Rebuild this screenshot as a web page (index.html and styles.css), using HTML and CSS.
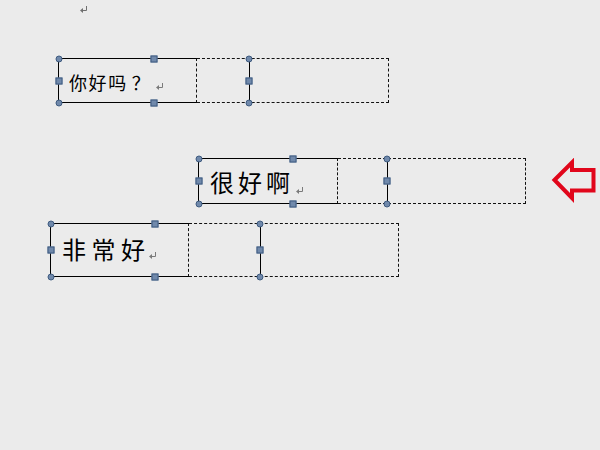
FILE: index.html
```html
<!DOCTYPE html>
<html lang="zh">
<head>
<meta charset="utf-8">
<title>文本框</title>
<link rel="stylesheet" href="styles.css">
</head>
<body>
<div class="page">
  <div class="mark-top">
    <svg class="ret" viewBox="0 0 7 7" width="7" height="7"><path d="M6.5 0 V4.5 H2.5" fill="none" stroke="#6f6f6f" stroke-width="1"/><polygon points="0,4.5 3,2 3,7" fill="#6f6f6f"/></svg>
  </div>

  <div class="frame f1">
    <div class="cell-a"><span class="txt">你好吗<span class="qm">？</span></span><svg class="ret" viewBox="0 0 7 7" width="7" height="7"><path d="M6.5 0 V4.5 H2.5" fill="none" stroke="#7a7a7a" stroke-width="1"/><polygon points="0,4.5 3,2 3,7" fill="#7a7a7a"/></svg></div>
    <div class="cell-b"></div>
    <div class="sel">
      <span class="h dot l t"></span><span class="h sq c t"></span><span class="h dot r t"></span>
      <span class="h sq l m"></span><span class="h sq r m"></span>
      <span class="h dot l b"></span><span class="h sq c b"></span><span class="h dot r b"></span>
    </div>
  </div>

  <div class="row2">
    <div class="frame f2">
      <div class="cell-a"><span class="txt">很好啊</span><svg class="ret" viewBox="0 0 7 7" width="7" height="7"><path d="M6.5 0 V4.5 H2.5" fill="none" stroke="#7a7a7a" stroke-width="1"/><polygon points="0,4.5 3,2 3,7" fill="#7a7a7a"/></svg></div>
      <div class="cell-b"></div>
      <div class="sel">
        <span class="h dot l t"></span><span class="h sq c t"></span><span class="h dot r t"></span>
        <span class="h sq l m"></span><span class="h sq r m"></span>
        <span class="h dot l b"></span><span class="h sq c b"></span><span class="h dot r b"></span>
      </div>
    </div>
    <svg class="arrow" viewBox="0 0 46 45" width="46" height="45">
      <polygon points="3.5,22 21,4.5 21,12 42.5,12 42.5,32.5 21,32.5 21,40" fill="none" stroke="#e1061b" stroke-width="4" stroke-linejoin="miter"/>
    </svg>
  </div>

  <div class="frame f3">
    <div class="cell-a"><span class="txt">非常好</span><svg class="ret" viewBox="0 0 7 7" width="7" height="7"><path d="M6.5 0 V4.5 H2.5" fill="none" stroke="#7a7a7a" stroke-width="1"/><polygon points="0,4.5 3,2 3,7" fill="#7a7a7a"/></svg></div>
    <div class="cell-b"></div>
    <div class="sel">
      <span class="h dot l t"></span><span class="h sq c t"></span><span class="h dot r t"></span>
      <span class="h sq l m"></span><span class="h sq r m"></span>
      <span class="h dot l b"></span><span class="h sq c b"></span><span class="h dot r b"></span>
    </div>
  </div>
</div>
</body>
</html>
```

FILE: styles.css
```css
html, body {
  margin: 0;
  padding: 0;
  background: #ebebeb;
}

.page {
  width: 600px;
  height: 450px;
  background: #ebebeb;
  font-family: "Noto Sans CJK SC", "Noto Sans", sans-serif;
  color: #000;
  overflow: hidden;
}

.ret {
  display: block;
  flex: none;
}

.mark-top {
  padding: 6px 0 0 80px;
  height: 7px;
}

.frame {
  position: relative;
  display: flex;
  box-sizing: border-box;
}

.cell-a {
  box-sizing: border-box;
  height: 100%;
  border: 1px solid #000;
  border-right: 1px dashed #111;
  display: flex;
  align-items: flex-start;
}

.cell-b {
  box-sizing: border-box;
  height: 100%;
  border: 1px dashed #111;
  border-left: none;
}

.txt {
  display: block;
  line-height: 1;
  white-space: nowrap;
}

.qm {
  margin-left: 4px;
}

.sel {
  position: absolute;
  left: 0;
  top: 0;
  height: 100%;
  box-sizing: border-box;
  border-right: 1px solid #000;
}

.h {
  position: absolute;
  box-sizing: border-box;
  width: 7px;
  height: 7px;
  transform: translate(-50%, -50%);
  background: #7089ab;
  border: 1px solid #3f5b80;
}

.dot { border-radius: 50%; }
.sq { border-radius: 0; }

.l { left: 0.5px; }
.c { left: 50%; }
.r { left: calc(100% - 0.5px); }
.t { top: 0.5px; }
.m { top: 50%; }
.b { top: calc(100% - 0.5px); }

/* frame 1 */
.f1 {
  margin: 45px 0 0 58px;
  height: 45px;
}
.f1 .cell-a { width: 139px; padding: 14px 0 0 10px; }
.f1 .cell-b { width: 192px; }
.f1 .sel { width: 192px; }
.f1 .txt { font-size: 18px; letter-spacing: 1.6px; }
.f1 .cell-a .ret { margin: 10px 0 0 5px; }

/* row with frame 2 and the arrow */
.row2 {
  display: flex;
  align-items: flex-start;
  margin-top: 55px;
}

.f2 {
  margin-left: 198px;
  height: 46px;
}
.f2 .cell-a { width: 140px; padding: 11px 0 0 11px; }
.f2 .cell-b { width: 188px; }
.f2 .sel { width: 190px; }
.f2 .txt { font-size: 24px; letter-spacing: 4px; }
.f2 .cell-a .ret { margin: 17px 0 0 2px; }

.arrow {
  display: block;
  flex: none;
  margin: 0 0 0 25px;
}

/* frame 3 */
.f3 {
  margin: 19px 0 0 50px;
  height: 54px;
}
.f3 .cell-a { width: 139px; padding: 13px 0 0 11px; }
.f3 .cell-b { width: 210px; }
.f3 .sel { width: 211px; }
.f3 .txt { font-size: 24px; letter-spacing: 5.5px; }
.f3 .cell-a .ret { margin: 15px 0 0 -2px; }
```
